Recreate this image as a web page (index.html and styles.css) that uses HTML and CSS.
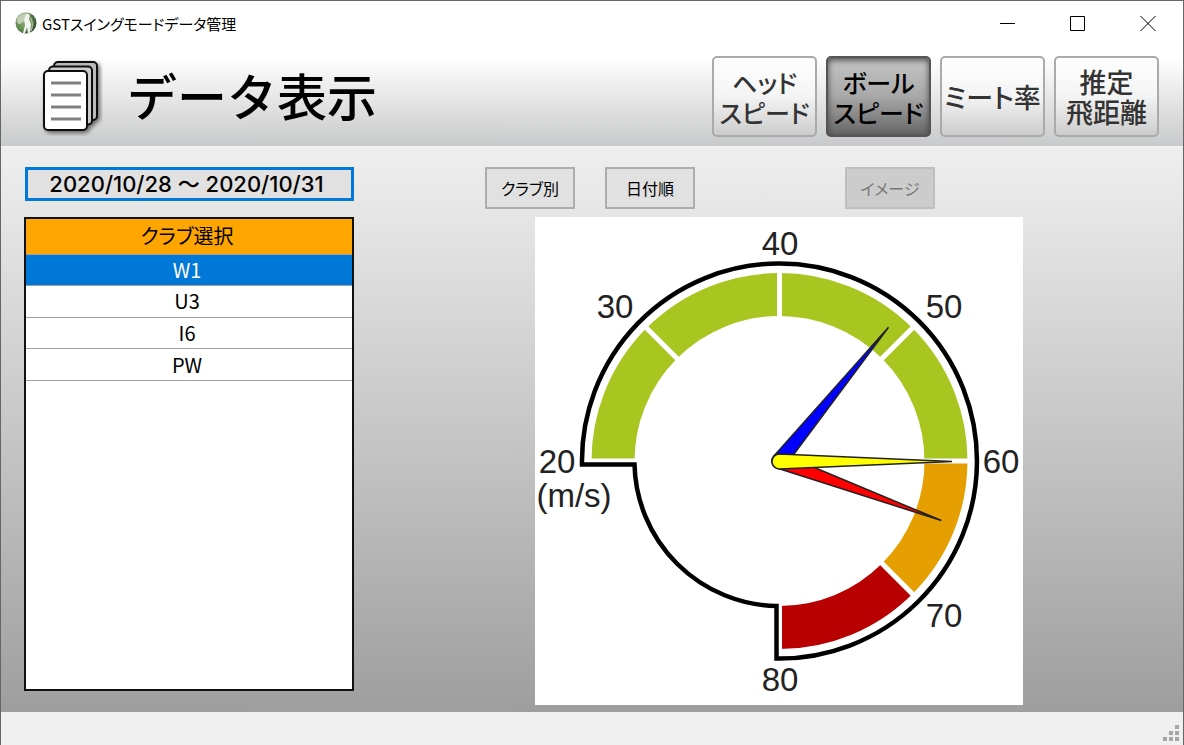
FILE: index.html
```html
<!DOCTYPE html>
<html lang="ja">
<head>
<meta charset="utf-8">
<meta name="viewport" content="width=device-width, initial-scale=1">
<title>GSTスイングモードデータ管理</title>
<link rel="stylesheet" href="styles.css">
</head>
<body>
<div class="window">
  <div class="titlebar">
    <svg class="app-icon" viewBox="0 0 22 22" aria-hidden="true">
      <defs>
        <radialGradient id="ball" cx="40%" cy="45%" r="65%">
          <stop offset="0" stop-color="#8cab74"/>
          <stop offset="0.6" stop-color="#648c50"/>
          <stop offset="1" stop-color="#24382a"/>
        </radialGradient>
      </defs>
      <circle cx="11" cy="11" r="10.5" fill="url(#ball)"/>
      <path d="M2 7C4 1 12 0 16 3L12 5 9 9 5 12C2 12 1 9 2 7Z" fill="#dfe6dc" opacity=".7"/>
      <path d="M11 2C14 1 15 4 14 7L16 12 15 21H13L12 15 10 21H8L10 13 9 8Z" fill="#f1f4f0"/>
      <path d="M14 4C18 8 18 14 16 19" fill="none" stroke="#c8d2c5"/>
    </svg>
    <span class="app-name">GSTスイングモードデータ管理</span>
    <div class="window-controls">
      <button type="button" aria-label="最小化"><svg viewBox="0 0 16 16"><path d="M0 8.500H15"/></svg></button>
      <button type="button" aria-label="最大化"><svg viewBox="0 0 16 16"><path d="M.5 1.500H14.500V15.500H.5Z"/></svg></button>
      <button type="button" aria-label="閉じる"><svg viewBox="0 0 16 16"><path d="M.5 1L15.500 16M15.500 1L.5 16"/></svg></button>
    </div>
  </div>

  <header class="header">
    <svg class="pages-icon" viewBox="0 0 64 80" aria-hidden="true">
      <defs>
        <filter id="soft" x="-20%" y="-20%" width="150%" height="150%">
          <feDropShadow dx="2" dy="2" stdDeviation="2" flood-opacity=".55"/>
        </filter>
      </defs>
      <g filter="url(#soft)" stroke="#111" stroke-width="2">
        <rect x="15" y="6" width="43" height="58" rx="4" fill="#b9bbb9"/>
        <rect x="10" y="10.500" width="43" height="58" rx="4" fill="#cbcdcb"/>
        <rect x="5" y="15" width="43" height="59" rx="4" fill="#fff"/>
      </g>
      <path d="M12 27H42M12 39H42M12 51H42M12 63H42" stroke="#808080" stroke-width="3"/>
    </svg>
    <h1 class="page-title">データ表示</h1>
    <nav class="modes">
      <button type="button" class="mode mode-kana">ヘッド<br>スピード</button>
      <button type="button" class="mode mode-kana mode-active" aria-pressed="true">ボール<br>スピード</button>
      <button type="button" class="mode">ミート率</button>
      <button type="button" class="mode">推定<br>飛距離</button>
    </nav>
  </header>

  <main class="content">
    <section class="sidebar">
      <button type="button" class="period">2020/10/28 ～ 2020/10/31</button>
      <div class="club-list">
        <table class="clubs">
          <thead><tr><th scope="col">クラブ選択</th></tr></thead>
          <tbody>
            <tr class="selected"><td>W1</td></tr>
            <tr><td>U3</td></tr>
            <tr><td>I6</td></tr>
            <tr><td>PW</td></tr>
          </tbody>
        </table>
      </div>
    </section>

    <section class="chart">
      <div class="toolbar">
        <button type="button" class="tool">クラブ別</button>
        <button type="button" class="tool">日付順</button>
        <button type="button" class="tool tool-image" disabled>イメージ</button>
      </div>
      <svg class="gauge" viewBox="0 0 488 488" role="img" aria-label="ボールスピード (m/s)">
        <rect width="488" height="488" fill="#fff"/>
        <g transform="translate(244.500 244)">
          <g fill="none" stroke-width="43">
            <path d="M-166.500 0A166.500 166.500 0 0 1 166.500 0" stroke="#a9c520"/>
            <path d="M166.500 0A166.500 166.500 0 0 1 117.700 117.700" stroke="#e59f00"/>
            <path d="M117.700 117.700A166.500 166.500 0 0 1 0 166.500" stroke="#b80000"/>
          </g>
          <path d="M-192 0H-140M192 0H140M0 -192V-140M0 192V140M-136 -136L-99 -99M136 -136L99 -99M136 136L99 99" stroke="#fff" stroke-width="5"/>
          <path d="M-197.500 3.500A197.500 197.500 0 1 1 -3 197.500V145A145 145 0 0 1 -145 3.500Z" fill="none" stroke="#000" stroke-width="4.500"/>
          <g stroke="#222" stroke-width="1.500">
            <path d="M172.500 0L0 -7.500A7.500 7.500 0 0 0 0 7.500Z" fill="#f00" transform="rotate(20.200)"/>
            <path d="M172.500 0L0 -7.500A7.500 7.500 0 0 0 0 7.500Z" fill="#00f" transform="rotate(-50.800)"/>
            <path d="M172.500 0L0 -7.500A7.500 7.500 0 0 0 0 7.500Z" fill="#ff0" transform="translate(0 .5)"/>
          </g>
        </g>
        <g class="gauge-labels">
          <text x="22" y="256">20</text>
          <text x="39" y="290">(m/s)</text>
          <text x="80" y="101">30</text>
          <text x="245" y="38">40</text>
          <text x="409" y="101">50</text>
          <text x="466" y="256">60</text>
          <text x="409" y="410">70</text>
          <text x="245" y="474">80</text>
        </g>
      </svg>
    </section>
  </main>

  <footer class="statusbar">
    <svg class="grip" viewBox="0 0 16 16" aria-hidden="true">
      <path d="M12 0h4v4h-4zM6 6h4v4h-4zM12 6h4v4h-4zM0 12h4v4h-4zM6 12h4v4h-4zM12 12h4v4h-4z" fill="#a6a6a6"/>
    </svg>
  </footer>
</div>
</body>
</html>
```

FILE: styles.css
```css
* {
  box-sizing: border-box;
}

body {
  margin: 0;
  font-family: "Noto Sans CJK JP", sans-serif;
  color: #000;
}

button {
  margin: 0;
  padding: 0;
  font-family: inherit;
  color: inherit;
}

.window {
  display: flex;
  flex-direction: column;
  min-height: 100vh;
  border: 1px solid #666;
  border-bottom: 0;
  background: #f0f0f0;
}

.titlebar {
  display: flex;
  align-items: center;
  height: 47px;
  padding: 0 0 3px 14px;
  background: #fff;
}

.app-icon {
  width: 22px;
  height: 22px;
  margin-right: 5px;
}

.app-name {
  font-size: 15px;
  font-feature-settings: "palt";
}

.window-controls {
  display: flex;
  margin-left: auto;
}

.window-controls button {
  display: grid;
  place-items: center;
  width: 70px;
  height: 44px;
  border: 0;
  background: none;
}

.window-controls svg {
  width: 16px;
  height: 16px;
  fill: none;
  stroke: #000;
}

.header {
  display: flex;
  align-items: flex-start;
  padding: 8px 24px 9px 38px;
  background: linear-gradient(#fff 10%, #c8c9ca);
  border-bottom: 1px solid #f4f4f4;
}

.pages-icon {
  width: 64px;
  height: 80px;
}

.page-title {
  margin: 0 0 0 24px;
  font-size: 50px;
  font-weight: 500;
  line-height: 76px;
}

.modes {
  display: flex;
  gap: 9px;
  margin-left: auto;
}

.mode {
  width: 105px;
  height: 81px;
  border: 2px solid #aaa;
  border-radius: 5px;
  background: linear-gradient(#fff, #f4f4f4 50%, #ccc);
  color: #333;
  font-size: 27px;
  font-weight: 500;
  line-height: 30px;
  font-feature-settings: "palt";
  white-space: nowrap;
}

.mode-kana {
  font-size: 25px;
}

.mode-active {
  border-color: #555;
  background: linear-gradient(#c4c5c6, #a8a8a8 50%, #666);
  box-shadow: inset 0 2px 6px #444;
  color: #000;
}

.content {
  display: grid;
  grid-template-columns: 330px 1fr;
  gap: 131px;
  flex: 1;
  padding: 20px 23px 7px;
  background: linear-gradient(#efefef, #9e9e9e);
}

.sidebar {
  display: flex;
  flex-direction: column;
  gap: 16px;
  padding-bottom: 14px;
}

.period {
  height: 34px;
  margin-left: 1px;
  padding-right: 6px;
  border: 3px solid #0078d7;
  background: #e1e1e1;
  font-family: Inter, "Noto Sans CJK JP", sans-serif;
  font-size: 22px;
  font-weight: 500;
  line-height: 26px;
}

.club-list {
  flex: 1;
  border: 2px solid #111;
  background: #fff;
}

.clubs {
  width: 100%;
  height: 162px;
  border-collapse: collapse;
  font-size: 20px;
  line-height: 28px;
  text-align: center;
  font-feature-settings: "palt";
}

.clubs th,
.clubs td {
  padding: 0 4px 0 0;
  border-bottom: 1px solid #a0a0a0;
  font-weight: 400;
}

.clubs th {
  height: 35px;
  background: #ffa500;
}

.clubs .selected {
  background: #0078d7;
  color: #fff;
}

.toolbar {
  display: flex;
  gap: 30px;
}

.tool {
  width: 90px;
  height: 42px;
  border: 2px solid #adadad;
  background: #e1e1e1;
  font-size: 16px;
  font-feature-settings: "palt";
}

.tool-image {
  margin-left: 120px;
}

.tool:disabled {
  border-color: #bfbfbf;
  background: #ccc;
  color: #777;
}

.gauge {
  display: block;
  width: 100%;
  max-width: 488px;
  margin: 8px 0 0 50px;
}

.gauge-labels {
  font-family: "Liberation Sans", Arial, sans-serif;
  font-size: 33px;
  fill: #222;
  text-anchor: middle;
}

.statusbar {
  display: flex;
  align-items: flex-end;
  justify-content: flex-end;
  height: 33px;
  padding: 0 4px 4px;
  background: #f0f0f0;
}

.grip {
  width: 16px;
  height: 16px;
}
```
